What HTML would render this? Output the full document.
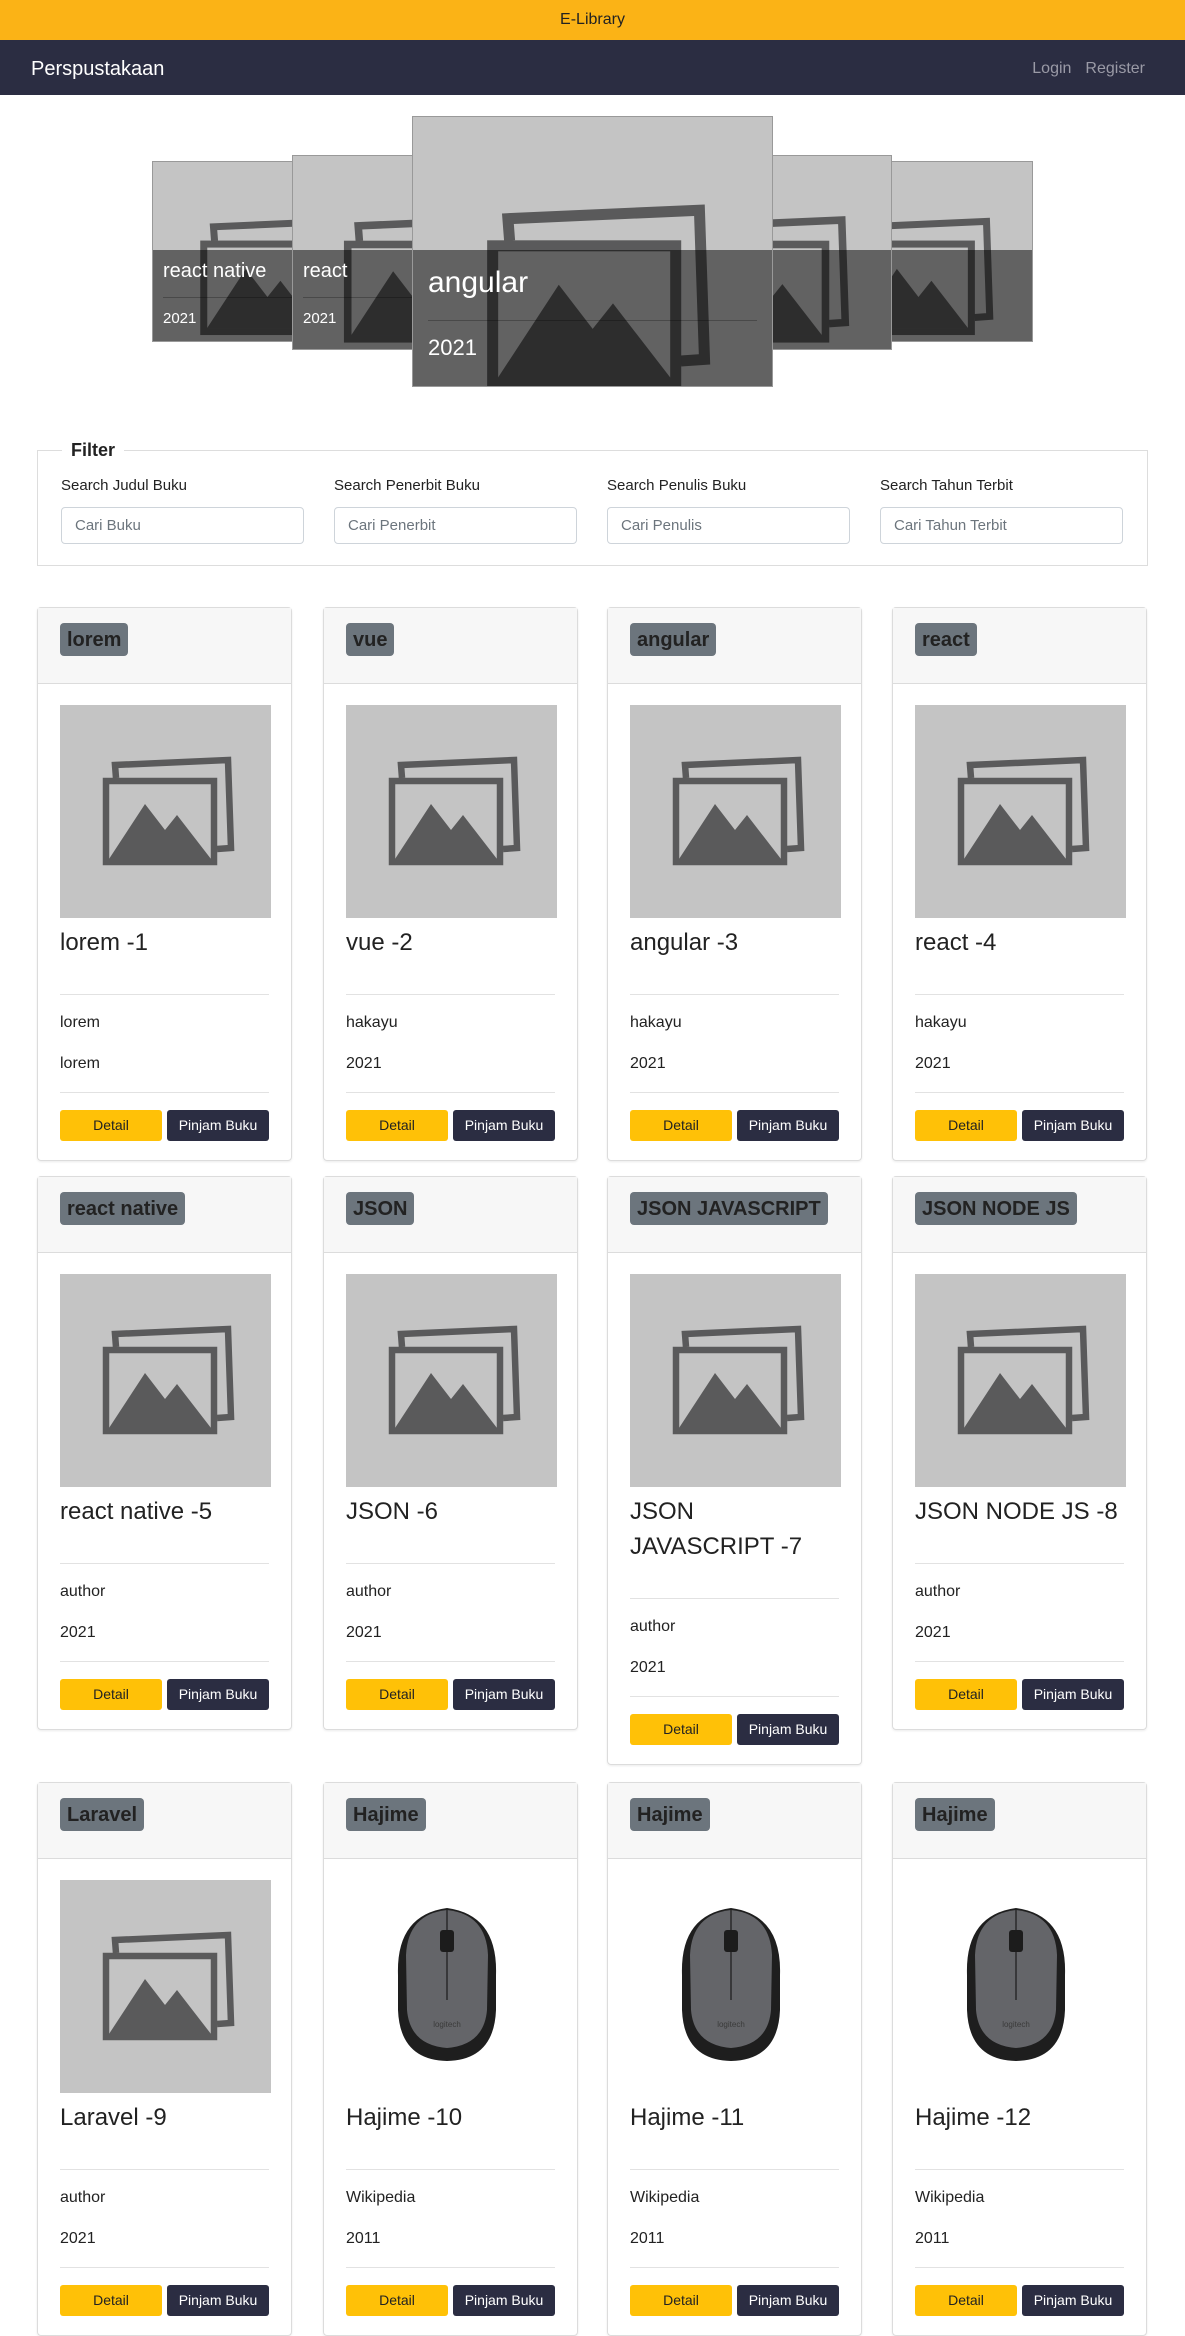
<!DOCTYPE html>
<html><head><meta charset="utf-8">
<style>
*{box-sizing:border-box;margin:0;padding:0}
body{width:1185px;height:2334px;overflow:hidden;font-family:"Liberation Sans",sans-serif;color:#212529;background:#fff;position:relative}
.top{height:40px;background:#fbb316;text-align:center;line-height:40px;font-size:16px;color:#222}
.nav{height:55px;background:#2b2d42;position:relative}
.nav .brand{position:absolute;left:31px;top:18px;font-size:20px;color:#fff}
.nav .links{position:absolute;right:40px;top:20px;font-size:16px;color:#9a9aa6}
.nav .links span{margin-left:14px}
.car{position:absolute;overflow:hidden;background:#c4c4c4;border:1px solid #999}
.car svg{position:absolute;left:0;top:0}
.car .ov{position:absolute;left:0;right:0;bottom:0;background:rgba(0,0,0,.5);color:#fff}
.ov hr{border:0;border-top:1px solid rgba(0,0,0,.25)}
fieldset{position:absolute;left:37px;top:440px;width:1111px;height:126px;border:1px solid #ddd}
legend{font-weight:bold;font-size:18px;margin-left:24px;padding:0 9px;color:#222}
.fl{position:absolute;top:16px;font-size:15px;color:#222}
.fl .in{position:absolute;top:30px;left:0;width:243px;height:37px;border:1px solid #ced4da;border-radius:4px;font-size:15px;color:#6c757d;line-height:35px;padding-left:13px;white-space:nowrap}
.card{position:absolute;width:255px;border:1px solid #dcdcdc;border-radius:4px;box-shadow:0 1px 2px rgba(0,0,0,.08)}
.ch{height:76px;background:#f7f7f7;border-bottom:1px solid #dcdcdc;padding:15px 0 0 22px}
.badge{display:inline-block;background:#6c757d;color:#222;font-weight:bold;font-size:20px;padding:2px 7px;border-radius:4px;height:33px;line-height:30px}
.cb{padding:21px 22px 19px 22px}
.img{width:211px;height:213px;background:#c4c4c4;display:block}
.img.w{background:#fff}
.t{font-size:24px;line-height:35px;margin-top:7px;margin-bottom:34px;color:#222}
.cb hr{border:0;border-top:1px solid #e2e2e2}
.p{font-size:16px;line-height:24px;color:#222}
.p1{margin-top:16px}.p2{margin-top:17px;margin-bottom:16px}
.btns{margin-top:17px;display:flex;justify-content:space-between}
.b{width:102px;height:31px;line-height:31px;text-align:center;font-size:14px;border-radius:3px}
.by{background:#ffc107;color:#222}.bd{background:#2b2d42;color:#fff}
</style></head><body>
<div class="top">E-Library</div>
<div class="nav"><div class="brand">Perspustakaan</div><div class="links"><span>Login</span><span>Register</span></div></div>

<svg width="0" height="0" style="position:absolute"><defs>
<g id="ph"><path d="M56 73 L55 60 L168 55 L171 143 L157 144" fill="none" stroke="#5a5a5b" stroke-width="6.5"/><rect x="46" y="76" width="108" height="81" fill="none" stroke="#5a5a5b" stroke-width="6.5"/><polygon points="49,154 85,99 105,125 117,110 151,154" fill="#5a5a5b"/></g>
<g id="mouse"><path d="M52 95 Q50 35 101 28 Q152 35 150 95 L150 130 Q148 180 101 181 Q54 180 52 130 Z" fill="#1e1e1e"/><path d="M60 75 Q62 34 101 30 Q140 34 142 75 L141 130 Q138 165 101 168 Q64 165 61 130 Z" fill="#646569"/><line x1="101" y1="30" x2="101" y2="120" stroke="#2a2a2a" stroke-width="1.5"/><rect x="94" y="50" width="14" height="22" rx="3" fill="#1c1c1c"/><text x="101" y="147" font-size="8" fill="#3a3a3a" text-anchor="middle" font-family="Liberation Sans">logitech</text></g>
</defs></svg>

<div class="car" style="left:152px;top:161px;width:230px;height:181px"><svg width="230" height="230" viewBox="0 0 211 213"><use href="#ph"/></svg><div class="ov" style="top:88px;padding:10px 10px"><div style="font-size:20px">react native</div><hr style="margin:14px 0 12px"><div style="font-size:15px">2021</div></div></div>
<div class="car" style="left:803px;top:161px;width:230px;height:181px"><svg width="230" height="230" viewBox="0 0 211 213"><use href="#ph"/></svg><div class="ov" style="top:88px"></div></div>
<div class="car" style="left:292px;top:155px;width:248px;height:195px"><svg width="248" height="248" viewBox="0 0 211 213"><use href="#ph"/></svg><div class="ov" style="top:94px;padding:10px 10px"><div style="font-size:20px">react</div><hr style="margin:14px 0 12px"><div style="font-size:15px">2021</div></div></div>
<div class="car" style="left:644px;top:155px;width:248px;height:195px"><svg width="248" height="248" viewBox="0 0 211 213"><use href="#ph"/></svg><div class="ov" style="top:94px"></div></div>
<div class="car" style="left:412px;top:116px;width:361px;height:271px"><svg width="361" height="361" viewBox="0 0 211 213"><use href="#ph"/></svg><div class="ov" style="top:133px;padding:16px 15px"><div style="font-size:30px">angular</div><hr style="margin:20px 0 14px"><div style="font-size:22px">2021</div></div></div>

<fieldset><legend>Filter</legend>
<div class="fl" style="left:23px">Search Judul Buku<div class="in">Cari Buku</div></div>
<div class="fl" style="left:296px">Search Penerbit Buku<div class="in">Cari Penerbit</div></div>
<div class="fl" style="left:569px">Search Penulis Buku<div class="in">Cari Penulis</div></div>
<div class="fl" style="left:842px">Search Tahun Terbit<div class="in">Cari Tahun Terbit</div></div>
</fieldset>

<!-- row 1 -->
<div class="card" style="left:37px;top:607px"><div class="ch"><span class="badge">lorem</span></div><div class="cb"><svg class="img" viewBox="0 0 211 213"><use href="#ph"/></svg><div class="t">lorem -1</div><hr><div class="p p1">lorem</div><div class="p p2">lorem</div><hr><div class="btns"><div class="b by">Detail</div><div class="b bd">Pinjam Buku</div></div></div></div>
<div class="card" style="left:323px;top:607px"><div class="ch"><span class="badge">vue</span></div><div class="cb"><svg class="img" viewBox="0 0 211 213"><use href="#ph"/></svg><div class="t">vue -2</div><hr><div class="p p1">hakayu</div><div class="p p2">2021</div><hr><div class="btns"><div class="b by">Detail</div><div class="b bd">Pinjam Buku</div></div></div></div>
<div class="card" style="left:607px;top:607px"><div class="ch"><span class="badge">angular</span></div><div class="cb"><svg class="img" viewBox="0 0 211 213"><use href="#ph"/></svg><div class="t">angular -3</div><hr><div class="p p1">hakayu</div><div class="p p2">2021</div><hr><div class="btns"><div class="b by">Detail</div><div class="b bd">Pinjam Buku</div></div></div></div>
<div class="card" style="left:892px;top:607px"><div class="ch"><span class="badge">react</span></div><div class="cb"><svg class="img" viewBox="0 0 211 213"><use href="#ph"/></svg><div class="t">react -4</div><hr><div class="p p1">hakayu</div><div class="p p2">2021</div><hr><div class="btns"><div class="b by">Detail</div><div class="b bd">Pinjam Buku</div></div></div></div>

<!-- row 2 -->
<div class="card" style="left:37px;top:1176px"><div class="ch"><span class="badge">react native</span></div><div class="cb"><svg class="img" viewBox="0 0 211 213"><use href="#ph"/></svg><div class="t">react native -5</div><hr><div class="p p1">author</div><div class="p p2">2021</div><hr><div class="btns"><div class="b by">Detail</div><div class="b bd">Pinjam Buku</div></div></div></div>
<div class="card" style="left:323px;top:1176px"><div class="ch"><span class="badge">JSON</span></div><div class="cb"><svg class="img" viewBox="0 0 211 213"><use href="#ph"/></svg><div class="t">JSON -6</div><hr><div class="p p1">author</div><div class="p p2">2021</div><hr><div class="btns"><div class="b by">Detail</div><div class="b bd">Pinjam Buku</div></div></div></div>
<div class="card" style="left:607px;top:1176px"><div class="ch"><span class="badge">JSON JAVASCRIPT</span></div><div class="cb"><svg class="img" viewBox="0 0 211 213"><use href="#ph"/></svg><div class="t">JSON JAVASCRIPT -7</div><hr><div class="p p1">author</div><div class="p p2">2021</div><hr><div class="btns"><div class="b by">Detail</div><div class="b bd">Pinjam Buku</div></div></div></div>
<div class="card" style="left:892px;top:1176px"><div class="ch"><span class="badge">JSON NODE JS</span></div><div class="cb"><svg class="img" viewBox="0 0 211 213"><use href="#ph"/></svg><div class="t">JSON NODE JS -8</div><hr><div class="p p1">author</div><div class="p p2">2021</div><hr><div class="btns"><div class="b by">Detail</div><div class="b bd">Pinjam Buku</div></div></div></div>

<!-- row 3 -->
<div class="card" style="left:37px;top:1782px"><div class="ch"><span class="badge">Laravel</span></div><div class="cb"><svg class="img" viewBox="0 0 211 213"><use href="#ph"/></svg><div class="t">Laravel -9</div><hr><div class="p p1">author</div><div class="p p2">2021</div><hr><div class="btns"><div class="b by">Detail</div><div class="b bd">Pinjam Buku</div></div></div></div>
<div class="card" style="left:323px;top:1782px"><div class="ch"><span class="badge">Hajime</span></div><div class="cb"><svg class="img w" viewBox="0 0 211 213"><use href="#mouse"/></svg><div class="t">Hajime -10</div><hr><div class="p p1">Wikipedia</div><div class="p p2">2011</div><hr><div class="btns"><div class="b by">Detail</div><div class="b bd">Pinjam Buku</div></div></div></div>
<div class="card" style="left:607px;top:1782px"><div class="ch"><span class="badge">Hajime</span></div><div class="cb"><svg class="img w" viewBox="0 0 211 213"><use href="#mouse"/></svg><div class="t">Hajime -11</div><hr><div class="p p1">Wikipedia</div><div class="p p2">2011</div><hr><div class="btns"><div class="b by">Detail</div><div class="b bd">Pinjam Buku</div></div></div></div>
<div class="card" style="left:892px;top:1782px"><div class="ch"><span class="badge">Hajime</span></div><div class="cb"><svg class="img w" viewBox="0 0 211 213"><use href="#mouse"/></svg><div class="t">Hajime -12</div><hr><div class="p p1">Wikipedia</div><div class="p p2">2011</div><hr><div class="btns"><div class="b by">Detail</div><div class="b bd">Pinjam Buku</div></div></div></div>
</body></html>
